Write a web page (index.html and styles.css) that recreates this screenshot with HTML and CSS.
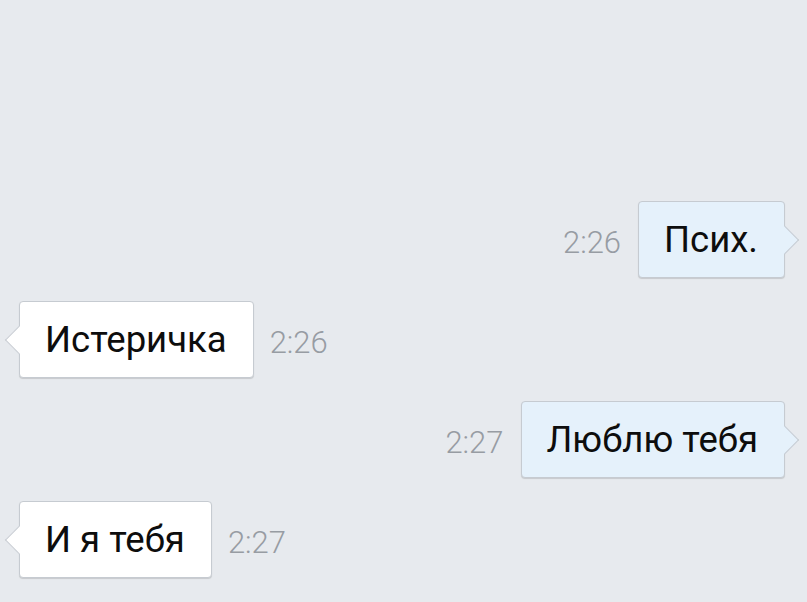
FILE: index.html
```html
<!DOCTYPE html>
<html lang="ru">
<head>
    <meta charset="UTF-8">
    <meta name="viewport" content="width=device-width, initial-scale=1.0">
    <title>Чат</title>
    <link rel="stylesheet" href="styles.css">
</head>
<body>
    <div class="chat">
        <div class="row out">
            <span class="time">2:26</span>
            <div class="bubble">Псих.</div>
        </div>
        <div class="row in">
            <div class="bubble">Истеричка</div>
            <span class="time">2:26</span>
        </div>
        <div class="row out">
            <span class="time">2:27</span>
            <div class="bubble">Люблю тебя</div>
        </div>
        <div class="row in">
            <div class="bubble">И я тебя</div>
            <span class="time">2:27</span>
        </div>
    </div>
</body>
</html>
```

FILE: styles.css
```css
body {
    margin: 0;
    background: #e7eaee;
    font-family: 'Roboto', 'Liberation Sans', sans-serif;
    height: 602px;
    overflow: hidden;
}

.chat {
    display: flex;
    flex-direction: column;
    gap: 23px;
    padding-top: 201px;
}

.row {
    display: flex;
    align-items: center;
    height: 77px;
}

.row.out {
    justify-content: flex-end;
    padding-right: 22px;
}

.row.in {
    padding-left: 19px;
}

.time {
    font-size: 31px;
    font-weight: 300;
    color: #979ca3;
    padding-top: 6px;
}

.out .time {
    margin-right: 17px;
}

.in .time {
    margin-left: 16px;
}

.bubble {
    position: relative;
    box-sizing: border-box;
    height: 77px;
    display: flex;
    align-items: center;
    padding: 0 26px 0 25px;
    font-size: 36.5px;
    color: #0d0d0d;
    background: #ffffff;
    border: 1px solid #c6cbd1;
    border-radius: 4px;
    box-shadow: 0 1px 1px rgba(0, 0, 0, 0.14);
}

.out .bubble {
    background: #e5f1fb;
}

/* хвостик пузыря */
.bubble::after {
    content: "";
    position: absolute;
    top: 50%;
    width: 19px;
    height: 19px;
    background: inherit;
    border: 1px solid #c6cbd1;
    transform: translateY(-50%) rotate(45deg);
}

.out .bubble::after {
    right: -11px;
    border-left: none;
    border-bottom: none;
}

.in .bubble::after {
    left: -11px;
    border-right: none;
    border-top: none;
}
```
